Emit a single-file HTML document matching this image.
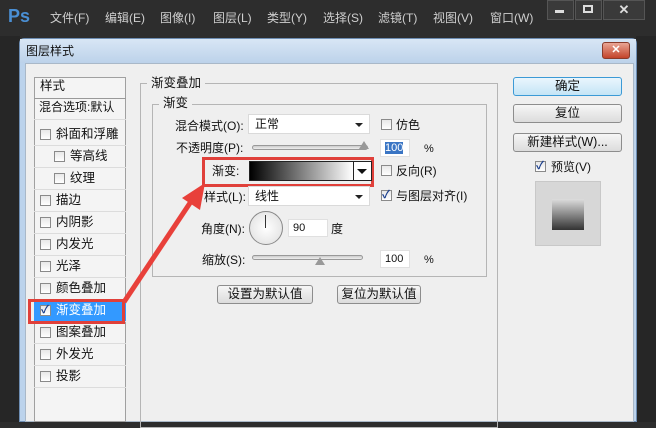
<!DOCTYPE html>
<html><head><meta charset="utf-8"><style>
*{margin:0;padding:0;box-sizing:border-box}
body{width:656px;height:422px;overflow:hidden;background:#2d2d2d;position:relative;font-family:"Liberation Sans","Noto Sans CJK SC",sans-serif;font-size:12px;color:#111;line-height:16px}
.a{position:absolute;white-space:nowrap}
.menu{color:#cfcfcf;font-size:12px;top:10px}
.cb{position:absolute;width:11px;height:11px;border:1px solid #8a8a8a;background:linear-gradient(#e8e8e8,#fff)}
.cb.on::after{content:"✓";position:absolute;left:0px;top:-4px;font-size:11px;color:#1a3e8c;font-weight:bold}
.item{position:absolute;left:34px;width:92px;height:22px;border-bottom:1px solid #dcdcdc}
.item span{position:absolute;left:22px;top:2px;font-size:12.5px}
.item .cb{left:6px;top:5px}
.dd{position:absolute;background:#fff;border:1px solid #dadada;height:20px}
.dd::after{content:"";position:absolute;right:6px;top:8px;border-left:4px solid transparent;border-right:4px solid transparent;border-top:4px solid #222}
.btn{position:absolute;border:1px solid #8d8d8d;border-radius:3px;background:linear-gradient(#f6f6f6,#dcdcdc);text-align:center;font-size:12.5px;line-height:16px}
.inp{position:absolute;background:#fff;border:1px solid #e0e0e0;height:18px;font-size:11px;padding-left:4px;line-height:16px}
</style></head><body>
<div class="a" style="left:8px;top:6px;font-size:18px;font-weight:bold;color:#4a8fd4;line-height:20px">Ps</div>
<div class="a menu" style="left:50px">文件(F)</div>
<div class="a menu" style="left:105px">编辑(E)</div>
<div class="a menu" style="left:160px">图像(I)</div>
<div class="a menu" style="left:213px">图层(L)</div>
<div class="a menu" style="left:267px">类型(Y)</div>
<div class="a menu" style="left:323px">选择(S)</div>
<div class="a menu" style="left:378px">滤镜(T)</div>
<div class="a menu" style="left:433px">视图(V)</div>
<div class="a menu" style="left:490px">窗口(W)</div>
<div class="a" style="left:547px;top:0;width:27px;height:20px;background:#3a3a3a;border:1px solid #555"></div>
<div class="a" style="left:555px;top:10px;width:9px;height:3px;background:#ddd"></div>
<div class="a" style="left:575px;top:0;width:27px;height:20px;background:#3a3a3a;border:1px solid #555"></div>
<div class="a" style="left:583px;top:5px;width:10px;height:8px;border:2px solid #ddd"></div>
<div class="a" style="left:603px;top:0;width:42px;height:20px;background:#3a3a3a;border:1px solid #555;color:#ddd;text-align:center;font-weight:bold;font-size:13px;line-height:18px">✕</div>
<div class="a" style="left:0;top:36px;width:20px;height:386px;background:#262626"></div>
<div class="a" style="left:636px;top:36px;width:20px;height:386px;background:#262626"></div>
<!-- dialog -->
<div class="a" style="left:19px;top:38px;width:618px;height:384px;background:#bcd3ec;border:1px solid #6d8db3;border-radius:5px 5px 0 0"></div>
<div class="a" style="left:20px;top:39px;width:616px;height:24px;background:linear-gradient(#d8e6f5,#bcd2ea)"></div>
<div class="a" style="left:26px;top:43px;font-size:12px">图层样式</div>
<div class="a" style="left:602px;top:42px;width:28px;height:17px;border-radius:3px;background:linear-gradient(#e9a594,#c3432a);border:1px solid #8a3b2b;color:#fff;text-align:center;font-weight:bold;font-size:11px;line-height:15px">✕</div>
<div class="a" style="left:25px;top:63px;width:609px;height:359px;background:#efefef;border:1px solid #a9b8c8"></div>
<!-- left list -->
<div class="a" style="left:34px;top:77px;width:92px;height:345px;background:#f4f4f4;border:1px solid #a0a0a0"></div>
<div class="item" style="top:77px;border-bottom:1px solid #999"><span style="left:6px;top:1px">样式</span></div>
<div class="item" style="top:98px"><span style="left:5px;top:1px;font-size:12px">混合选项:默认</span></div>
<div class="item" style="top:124px"><div class="cb"></div><span>斜面和浮雕</span></div>
<div class="item" style="top:146px"><div class="cb" style="left:20px"></div><span style="left:36px">等高线</span></div>
<div class="item" style="top:168px"><div class="cb" style="left:20px"></div><span style="left:36px">纹理</span></div>
<div class="item" style="top:190px"><div class="cb"></div><span>描边</span></div>
<div class="item" style="top:212px"><div class="cb"></div><span>内阴影</span></div>
<div class="item" style="top:234px"><div class="cb"></div><span>内发光</span></div>
<div class="item" style="top:256px"><div class="cb"></div><span>光泽</span></div>
<div class="item" style="top:278px"><div class="cb"></div><span>颜色叠加</span></div>
<div class="item" style="top:300px;background:#3399ff;color:#fff"><div class="cb on"></div><span>渐变叠加</span></div>
<div class="item" style="top:322px"><div class="cb"></div><span>图案叠加</span></div>
<div class="item" style="top:344px"><div class="cb"></div><span>外发光</span></div>
<div class="item" style="top:366px"><div class="cb"></div><span>投影</span></div>
<div class="a" style="left:28px;top:299px;width:97px;height:25px;border:3px solid #e0403a"></div>
<!-- group boxes -->
<div class="a" style="left:140px;top:83px;width:358px;height:345px;border:1px solid #b5b5b5"></div>
<div class="a" style="left:147px;top:75px;background:#efefef;padding:0 4px;font-size:12.5px">渐变叠加</div>
<div class="a" style="left:152px;top:104px;width:335px;height:173px;border:1px solid #b5b5b5"></div>
<div class="a" style="left:159px;top:95px;background:#efefef;padding:0 4px;font-size:12.5px">渐变</div>
<div class="a" style="left:175px;top:118px">混合模式(O):</div>
<div class="dd" style="left:248px;top:114px;width:122px"><span style="position:absolute;left:6px;top:1px">正常</span></div>
<div class="cb" style="left:381px;top:119px"></div><div class="a" style="left:396px;top:117px">仿色</div>
<div class="a" style="left:176px;top:140px">不透明度(P):</div>
<div class="a" style="left:252px;top:145px;width:116px;height:5px;border:1px solid #999;border-radius:3px;background:linear-gradient(#ccc,#eee)"></div>
<div class="a" style="left:359px;top:141px;width:0;height:0;border-left:5px solid transparent;border-right:5px solid transparent;border-bottom:8px solid #999"></div>
<div class="inp" style="left:380px;top:139px;width:30px"><span style="background:#3a75c4;color:#fff">100</span></div>
<div class="a" style="left:424px;top:141px;font-size:11px">%</div>
<div class="a" style="left:202px;top:157px;width:172px;height:30px;border:3px solid #e0403a"></div>
<div class="a" style="left:212px;top:163px">渐变:</div>
<div class="a" style="left:249px;top:161px;width:123px;height:20px;border:1px solid #222;background:linear-gradient(90deg,#000,#fff 85%)"></div>
<div class="a" style="left:353px;top:162px;width:18px;height:18px;background:#fff;border-left:1px solid #222"></div>
<div class="a" style="left:357px;top:169px;border-left:5px solid transparent;border-right:5px solid transparent;border-top:5px solid #111"></div>
<div class="cb" style="left:381px;top:165px"></div><div class="a" style="left:396px;top:163px">反向(R)</div>
<div class="a" style="left:204px;top:189px">样式(L):</div>
<div class="dd" style="left:248px;top:186px;width:122px"><span style="position:absolute;left:6px;top:1px">线性</span></div>
<div class="cb on" style="left:381px;top:190px"></div><div class="a" style="left:396px;top:188px">与图层对齐(I)</div>
<div class="a" style="left:201px;top:221px">角度(N):</div>
<div class="a" style="left:249px;top:211px;width:34px;height:34px;border-radius:50%;border:1px solid #888;background:radial-gradient(#fff,#ddd)"></div>
<div class="a" style="left:265px;top:215px;width:1px;height:13px;background:#333"></div>
<div class="inp" style="left:288px;top:219px;width:40px">90</div>
<div class="a" style="left:331px;top:221px">度</div>
<div class="a" style="left:202px;top:252px">缩放(S):</div>
<div class="a" style="left:252px;top:255px;width:111px;height:5px;border:1px solid #999;border-radius:3px;background:linear-gradient(#ccc,#eee)"></div>
<div class="a" style="left:315px;top:257px;width:0;height:0;border-left:5px solid transparent;border-right:5px solid transparent;border-bottom:8px solid #999"></div>
<div class="inp" style="left:380px;top:250px;width:30px">100</div>
<div class="a" style="left:424px;top:252px;font-size:11px">%</div>
<div class="btn" style="left:217px;top:285px;width:96px;height:19px">设置为默认值</div>
<div class="btn" style="left:337px;top:285px;width:84px;height:19px">复位为默认值</div>
<!-- right -->
<div class="btn" style="left:513px;top:77px;width:109px;height:19px;border:1px solid #3c9ad6;background:linear-gradient(#eaf6fd,#c4e5f6)">确定</div>
<div class="btn" style="left:513px;top:104px;width:109px;height:19px">复位</div>
<div class="btn" style="left:513px;top:133px;width:109px;height:19px">新建样式(W)...</div>
<div class="cb on" style="left:535px;top:161px"></div><div class="a" style="left:551px;top:159px">预览(V)</div>
<div class="a" style="left:535px;top:181px;width:66px;height:65px;background:#d7d7d7;border:1px solid #c8c8c8"></div>
<div class="a" style="left:552px;top:199px;width:32px;height:31px;background:linear-gradient(#ddd,#333)"></div>
<!-- arrow -->
<svg class="a" style="left:0;top:0" width="656" height="422"><line x1="124" y1="302" x2="192" y2="200" stroke="#e8403a" stroke-width="5"/><polygon points="205,183 182,198 200,210" fill="#e8403a"/></svg>
</body></html>
